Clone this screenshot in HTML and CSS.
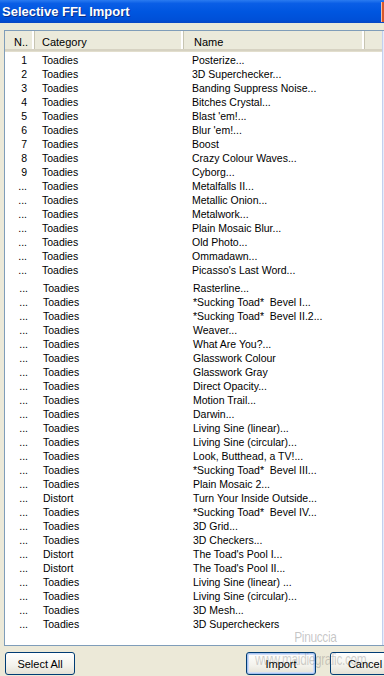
FILE: index.html
```html
<!DOCTYPE html>
<html lang="en">
<head>
  <meta charset="UTF-8" />
  <meta name="viewport" content="width=device-width, initial-scale=1" />
  <title>Selective FFL Import</title>
  <link rel="stylesheet" href="styles.css">
</head>
<body>

  <div class="titlebar">
    <span class="title">Selective FFL Import</span>
    <span class="close"></span>
  </div>

  <div class="dialog">
    <div class="listview">
      <div class="list">
        <div class="header">
          <div class="hcell num">N..</div>
          <div class="hcell cat">Category</div>
          <div class="hcell name">Name</div>
          <div class="hcell rest"></div>
        </div>

        <div class="rows">
          <div class="row"><span class="num">1</span><span class="cat">Toadies</span><span class="name">Posterize...</span></div>
          <div class="row"><span class="num">2</span><span class="cat">Toadies</span><span class="name">3D Superchecker...</span></div>
          <div class="row"><span class="num">3</span><span class="cat">Toadies</span><span class="name">Banding Suppress Noise...</span></div>
          <div class="row"><span class="num">4</span><span class="cat">Toadies</span><span class="name">Bitches Crystal...</span></div>
          <div class="row"><span class="num">5</span><span class="cat">Toadies</span><span class="name">Blast 'em!...</span></div>
          <div class="row"><span class="num">6</span><span class="cat">Toadies</span><span class="name">Blur 'em!...</span></div>
          <div class="row"><span class="num">7</span><span class="cat">Toadies</span><span class="name">Boost</span></div>
          <div class="row"><span class="num">8</span><span class="cat">Toadies</span><span class="name">Crazy Colour Waves...</span></div>
          <div class="row"><span class="num">9</span><span class="cat">Toadies</span><span class="name">Cyborg...</span></div>
          <div class="row"><span class="num">...</span><span class="cat">Toadies</span><span class="name">Metalfalls II...</span></div>
          <div class="row"><span class="num">...</span><span class="cat">Toadies</span><span class="name">Metallic Onion...</span></div>
          <div class="row"><span class="num">...</span><span class="cat">Toadies</span><span class="name">Metalwork...</span></div>
          <div class="row"><span class="num">...</span><span class="cat">Toadies</span><span class="name">Plain Mosaic Blur...</span></div>
          <div class="row"><span class="num">...</span><span class="cat">Toadies</span><span class="name">Old Photo...</span></div>
          <div class="row"><span class="num">...</span><span class="cat">Toadies</span><span class="name">Ommadawn...</span></div>
          <div class="row"><span class="num">...</span><span class="cat">Toadies</span><span class="name">Picasso's Last Word...</span></div>
        </div>

        <div class="rows second">
          <div class="row"><span class="num">...</span><span class="cat">Toadies</span><span class="name">Rasterline...</span></div>
          <div class="row"><span class="num">...</span><span class="cat">Toadies</span><span class="name">*Sucking Toad*&nbsp; Bevel I...</span></div>
          <div class="row"><span class="num">...</span><span class="cat">Toadies</span><span class="name">*Sucking Toad*&nbsp; Bevel II.2...</span></div>
          <div class="row"><span class="num">...</span><span class="cat">Toadies</span><span class="name">Weaver...</span></div>
          <div class="row"><span class="num">...</span><span class="cat">Toadies</span><span class="name">What Are You?...</span></div>
          <div class="row"><span class="num">...</span><span class="cat">Toadies</span><span class="name">Glasswork Colour</span></div>
          <div class="row"><span class="num">...</span><span class="cat">Toadies</span><span class="name">Glasswork Gray</span></div>
          <div class="row"><span class="num">...</span><span class="cat">Toadies</span><span class="name">Direct Opacity...</span></div>
          <div class="row"><span class="num">...</span><span class="cat">Toadies</span><span class="name">Motion Trail...</span></div>
          <div class="row"><span class="num">...</span><span class="cat">Toadies</span><span class="name">Darwin...</span></div>
          <div class="row"><span class="num">...</span><span class="cat">Toadies</span><span class="name">Living Sine (linear)...</span></div>
          <div class="row"><span class="num">...</span><span class="cat">Toadies</span><span class="name">Living Sine (circular)...</span></div>
          <div class="row"><span class="num">...</span><span class="cat">Toadies</span><span class="name">Look, Butthead, a TV!...</span></div>
          <div class="row"><span class="num">...</span><span class="cat">Toadies</span><span class="name">*Sucking Toad*&nbsp; Bevel III...</span></div>
          <div class="row"><span class="num">...</span><span class="cat">Toadies</span><span class="name">Plain Mosaic 2...</span></div>
          <div class="row"><span class="num">...</span><span class="cat">Distort</span><span class="name">Turn Your Inside Outside...</span></div>
          <div class="row"><span class="num">...</span><span class="cat">Toadies</span><span class="name">*Sucking Toad*&nbsp; Bevel IV...</span></div>
          <div class="row"><span class="num">...</span><span class="cat">Toadies</span><span class="name">3D Grid...</span></div>
          <div class="row"><span class="num">...</span><span class="cat">Toadies</span><span class="name">3D Checkers...</span></div>
          <div class="row"><span class="num">...</span><span class="cat">Distort</span><span class="name">The Toad's Pool I...</span></div>
          <div class="row"><span class="num">...</span><span class="cat">Distort</span><span class="name">The Toad's Pool II...</span></div>
          <div class="row"><span class="num">...</span><span class="cat">Toadies</span><span class="name">Living Sine (linear) ...</span></div>
          <div class="row"><span class="num">...</span><span class="cat">Toadies</span><span class="name">Living Sine (circular)...</span></div>
          <div class="row"><span class="num">...</span><span class="cat">Toadies</span><span class="name">3D Mesh...</span></div>
          <div class="row"><span class="num">...</span><span class="cat">Toadies</span><span class="name">3D Supercheckers</span></div>
        </div>

        <span class="mark-name">Pinuccia</span>
      </div>
      <div class="scroll-peek"></div>
    </div>

    <div class="buttons">
      <button class="btn">Select All</button>
      <span class="spacer"></span>
      <button class="btn default">Import</button>
      <button class="btn">Cancel</button>
      <span class="mark-site">www.maidiegrafic.com</span>
    </div>
  </div>

</body>
</html>
```

FILE: styles.css
```css
* {
  margin: 0;
  padding: 0;
  box-sizing: border-box;
}

body {
  width: 384px;
  height: 676px;
  overflow: hidden;
  background-color: #ece9d8;
  font-family: 'Liberation Sans', Arial, sans-serif;
  font-size: 10.5px;
  color: #000;
}

.titlebar {
  height: 23px;
  display: flex;
  align-items: center;
  justify-content: space-between;
  background: linear-gradient(#2a7bf0 0%, #0a5ee6 15%, #0056e0 50%, #0050d8 85%, #0a47c2 100%);
}

.title {
  padding-left: 2px;
  color: #fff;
  font-size: 13px;
  font-weight: bold;
  text-shadow: 1px 1px 0 #0a2f8a;
}

.close {
  width: 3px;
  height: 20px;
  margin-top: 1px;
  background-color: #d8572c;
  border-left: 1px solid #f4c0a8;
}

.dialog {
  padding-top: 7px;
}

.listview {
  display: flex;
  height: 616px;
  margin-left: 4px;
  border: 1px solid #7f9db9;
  border-right: none;
  background-color: #fff;
}

.list {
  position: relative;
  width: 377px;
}

.scroll-peek {
  flex: 1;
  border-left: 1px solid #c3d0ee;
  background: linear-gradient(90deg, #eef2fd, #dfe7fb);
}

.header {
  display: flex;
  height: 20px;
  background-color: #ebeadb;
  border-bottom: 2px solid #d6d2c2;
  box-shadow: 0 1px 0 #e2decd;
}

.hcell {
  display: flex;
  align-items: center;
  height: 100%;
  padding-top: 3px;
  font-size: 11px;
  border-right: 1px solid #c7c5b2;
  box-shadow: inset -2px 0 0 #fff;
}

.hcell.num {
  width: 30px;
  padding-left: 9px;
}

.hcell.cat {
  width: 149px;
  padding-left: 7px;
}

.hcell.name {
  width: 181px;
  padding-left: 10px;
}

.hcell.rest {
  flex: 1;
  border-right: none;
  box-shadow: none;
}

.rows {
  padding-top: 2px;
}

.rows.second {
  padding-top: 4px;
  padding-left: 1px;
}

.row {
  display: flex;
  height: 14px;
  line-height: 14px;
  white-space: nowrap;
}

.row .num {
  width: 29px;
  padding-right: 7px;
  text-align: right;
}

.row .cat {
  width: 150px;
  padding-left: 8px;
}

.row .name {
  padding-left: 8px;
}

.mark-name {
  position: absolute;
  left: 284px;
  bottom: 0;
  font-size: 15px;
  letter-spacing: -0.5px;
  color: rgba(90, 90, 90, 0.35);
  transform: scaleX(0.8);
}

.buttons {
  position: relative;
  display: flex;
  width: 400px;
  padding: 6px 0 0 5px;
}

.spacer {
  flex: 1;
}

.btn {
  width: 70px;
  height: 23px;
  font-family: 'Liberation Sans', Arial, sans-serif;
  font-size: 11px;
  color: #000;
  border: 1px solid #003c74;
  border-radius: 3px;
  background: linear-gradient(#ffffff 0%, #f3f2ec 60%, #e4e1d5 100%);
}

.btn.default {
  margin-right: 14px;
  box-shadow: inset 0 0 0 1px #a6c2ef, inset 0 0 0 2px #cfdcf7;
}

.mark-site {
  position: absolute;
  left: 255px;
  top: 4px;
  font-size: 17px;
  letter-spacing: -0.5px;
  color: rgba(90, 90, 90, 0.28);
  transform: scaleX(0.7);
  transform-origin: left center;
}
```
